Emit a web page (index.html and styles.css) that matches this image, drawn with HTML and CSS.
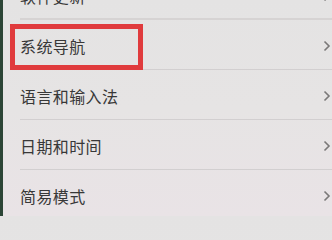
FILE: index.html
```html
<!DOCTYPE html>
<html lang="zh-CN">
<head>
<meta charset="utf-8">
<link rel="stylesheet" href="styles.css">
</head>
<body>
<div class="screen">
  <ul class="list">
    <li class="row row-top"><span class="label">软件更新</span><svg class="chev" viewBox="0 0 8 12"><polyline points="1.5,1.5 6,6 1.5,10.5"/></svg></li>
    <li class="row row-marked"><span class="label">系统导航</span><svg class="chev" viewBox="0 0 8 12"><polyline points="1.5,1.5 6,6 1.5,10.5"/></svg><span class="mark"></span></li>
    <li class="row"><span class="label">语言和输入法</span><svg class="chev" viewBox="0 0 8 12"><polyline points="1.5,1.5 6,6 1.5,10.5"/></svg></li>
    <li class="row"><span class="label">日期和时间</span><svg class="chev" viewBox="0 0 8 12"><polyline points="1.5,1.5 6,6 1.5,10.5"/></svg></li>
    <li class="row"><span class="label">简易模式</span><svg class="chev" viewBox="0 0 8 12"><polyline points="1.5,1.5 6,6 1.5,10.5"/></svg></li>
  </ul>
</div>
</body>
</html>
```
FILE: styles.css
```css
html, body {
  margin: 0;
  padding: 0;
  width: 332px;
  height: 216px;
  overflow: hidden;
}
body {
  font-family: "Noto Sans CJK SC", "Noto Sans", sans-serif;
  background: linear-gradient(180deg, #e4e3e3 0%, #e6e4e4 50%, #e9e3e6 100%);
}
.screen {
  height: 216px;
  border-left: 3px solid #2c4536;
  box-sizing: border-box;
  overflow: hidden;
}
.list {
  list-style: none;
  margin: 0;
  padding: 0;
}
.row {
  position: relative;
  display: flex;
  align-items: center;
  justify-content: space-between;
  height: 50px;
  box-sizing: border-box;
  margin-left: 17px;
  padding-top: 3px;
  border-bottom: 1px solid #d2cfd0;
}
.row-top {
  margin-top: -30px;
  border-bottom: 2px solid #d6d3d3;
}
.label {
  font-size: 16px;
  color: #383838;
  letter-spacing: 0.4px;
}
.chev {
  width: 8px;
  height: 12px;
  margin-right: 1px;
  fill: none;
  stroke: #7a7878;
  stroke-width: 1.6;
}
.mark {
  position: absolute;
  left: -10px;
  top: 4px;
  width: 133px;
  height: 46px;
  box-sizing: border-box;
  border: 5px solid #e03b3d;
}
```
